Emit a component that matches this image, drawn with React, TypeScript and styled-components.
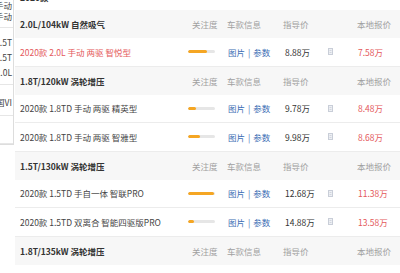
import React, { FC } from 'react';
import styled, { createGlobalStyle } from 'styled-components';

const GlobalStyle = createGlobalStyle`
  html, body {
    margin: 0;
    padding: 0;
    background: #fff;
  }
  body {
    font-family: "Noto Sans CJK SC", "Noto Sans", sans-serif;
    font-size: 8.5px;
    color: #333;
  }
`;

const Page = styled.div`
  display: flex;
  width: 400px;
  height: 273px;
  overflow: hidden;
  background: #fff;
`;

const Sidebar = styled.ul`
  flex: none;
  align-self: flex-start;
  width: 13px;
  height: 144px;
  margin: 0;
  padding: 0;
  list-style: none;
  border-right: 1px solid #ddd;
  border-bottom: 1px solid #ddd;
  overflow: hidden;
`;

const SideItem = styled.li<{ $h: number; $pt: number; $lh: number }>`
  height: ${(p) => p.$h}px;
  padding-top: ${(p) => p.$pt}px;
  line-height: ${(p) => p.$lh}px;
  border-bottom: 1px solid #e6e6e6;
  box-sizing: border-box;
  overflow: hidden;
`;

const SideLine = styled.div`
  display: flex;
  justify-content: flex-end;
  padding-right: 1px;
  color: #444;
  span {
    flex: none;
    white-space: nowrap;
  }
`;

const Main = styled.div`
  flex: 1;
  margin-left: 1px;
  margin-top: -17px;
`;

const YearTitle = styled.div`
  box-sizing: border-box;
  height: 27px;
  padding: 5px 0 0 5px;
  line-height: 18px;
  font-weight: bold;
`;

const Grid = styled.div<{ $head?: boolean }>`
  display: grid;
  grid-template-columns: 173px 38px 56px 43px 30px 1fr;
  align-items: center;
  box-sizing: border-box;
  height: ${(p) => (p.$head ? '28px' : '28.5px')};
  background: ${(p) => (p.$head ? '#f7f7f7' : '#fff')};
  border-bottom: ${(p) => (p.$head ? 'none' : '1px solid #ececec')};
`;

const GroupTitle = styled.div`
  padding-left: 5px;
  font-weight: bold;
  color: #333;
`;

const ColHead = styled.div<{ $pl?: number }>`
  padding-left: ${(p) => p.$pl ?? 0}px;
  color: #a0a0a0;
`;

const Name = styled.div<{ $active?: boolean }>`
  padding-left: 5px;
  white-space: nowrap;
  color: ${(p) => (p.$active ? '#e4585b' : '#444')};
`;

const Bar = styled.div`
  width: 27px;
  height: 3px;
  border-radius: 2px;
  background: #e6e6e6;
  overflow: hidden;
`;

const BarFill = styled.div`
  height: 100%;
  border-radius: 2px;
  background: #f5a623;
`;

const Links = styled.div`
  padding-left: 2px;
  color: #3c6eb4;
  white-space: nowrap;
`;

const Sep = styled.span`
  margin: 0 3px;
`;

const Price = styled.div`
  padding-left: 3px;
  color: #333;
`;

const IconCell = styled.div`
  padding-left: 3px;
  display: flex;
  align-items: center;
`;

const Local = styled.div`
  padding-left: 3px;
  color: #e4585b;
`;

type Row = {
  name: string;
  hot: number;
  guide: string;
  local: string;
  active?: boolean;
};

type Group = { title: string; rows: Row[] };

const groups: Group[] = [
  {
    title: '2.0L/104kW 自然吸气',
    rows: [{ name: '2020款 2.0L 手动 两驱 智悦型', hot: 70, guide: '8.88万', local: '7.58万', active: true }],
  },
  {
    title: '1.8T/120kW 涡轮增压',
    rows: [
      { name: '2020款 1.8TD 手动 两驱 精英型', hot: 30, guide: '9.78万', local: '8.48万' },
      { name: '2020款 1.8TD 手动 两驱 智雅型', hot: 45, guide: '9.98万', local: '8.68万' },
    ],
  },
  {
    title: '1.5T/130kW 涡轮增压',
    rows: [
      { name: '2020款 1.5TD 手自一体 智联PRO', hot: 95, guide: '12.68万', local: '11.38万' },
      { name: '2020款 1.5TD 双离合 智能四驱版PRO', hot: 22, guide: '14.88万', local: '13.58万' },
    ],
  },
  { title: '1.8T/135kW 涡轮增压', rows: [] },
];

const sideItems = [
  { h: 28, pt: 0, lh: 11, lines: ['2.0L 手动', '1.8TD 手动'] },
  { h: 57, pt: 7, lh: 15, lines: ['1.5T', '1.5T', '2.0L'] },
  { h: 31, pt: 10, lh: 15, lines: ['国VI'] },
  { h: 28, pt: 0, lh: 15, lines: [] },
];

const CalcIcon: FC = () => (
  <svg width="5" height="7" viewBox="0 0 5 7">
    <rect x="0.5" y="0.5" width="4" height="6" fill="#eef0f4" stroke="#c9ced8" strokeWidth="1" />
    <line x1="1.5" y1="2.5" x2="3.5" y2="2.5" stroke="#c9ced8" strokeWidth="0.8" />
    <line x1="1.5" y1="4.5" x2="3.5" y2="4.5" stroke="#c9ced8" strokeWidth="0.8" />
  </svg>
);

const App: FC = () => (
  <>
    <GlobalStyle />
    <Page>
      <Sidebar>
        {sideItems.map((it, i) => (
          <SideItem key={i} $h={it.h} $pt={it.pt} $lh={it.lh}>
            {it.lines.map((l, j) => (
              <SideLine key={j}>
                <span>{l}</span>
              </SideLine>
            ))}
          </SideItem>
        ))}
      </Sidebar>
      <Main>
        <YearTitle>2020款</YearTitle>
        {groups.map((g) => (
          <React.Fragment key={g.title}>
            <Grid $head>
              <GroupTitle>{g.title}</GroupTitle>
              <ColHead $pl={4}>关注度</ColHead>
              <ColHead $pl={1}>车款信息</ColHead>
              <ColHead $pl={1}>指导价</ColHead>
              <div />
              <ColHead $pl={2}>本地报价</ColHead>
            </Grid>
            {g.rows.map((r) => (
              <Grid key={r.name}>
                <Name $active={r.active}>{r.name}</Name>
                <Bar>
                  <BarFill style={{ width: `${r.hot}%` }} />
                </Bar>
                <Links>
                  图片<Sep>|</Sep>参数
                </Links>
                <Price>{r.guide}</Price>
                <IconCell>
                  <CalcIcon />
                </IconCell>
                <Local>{r.local}</Local>
              </Grid>
            ))}
          </React.Fragment>
        ))}
      </Main>
    </Page>
  </>
);

export default App;
